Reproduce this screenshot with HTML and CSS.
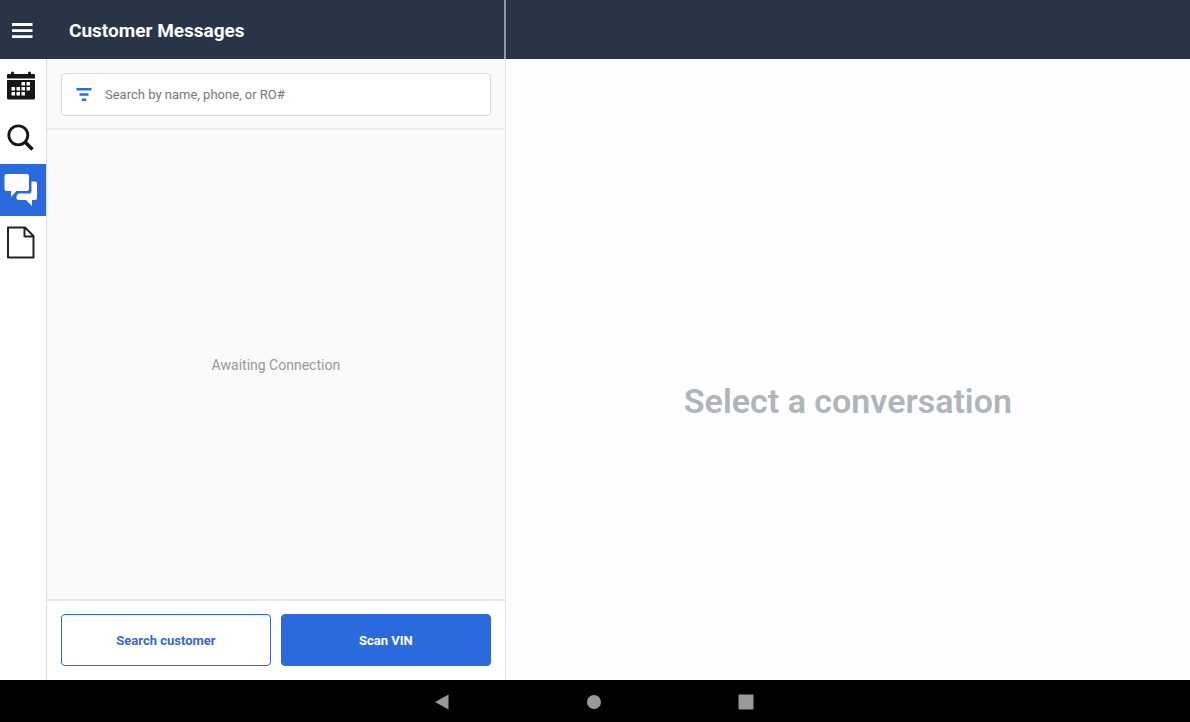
FILE: index.html
```html
<!DOCTYPE html>
<html lang="en">
<head>
<meta charset="utf-8">
<meta name="viewport" content="width=device-width, initial-scale=1">
<title>Customer Messages</title>
<link rel="stylesheet" href="styles.css">
</head>
<body>
<div class="app">
  <header class="topbar">
    <div class="topbar-main">
      <button class="menu-button" type="button" aria-label="Menu">
        <svg width="22" height="18" viewBox="0 0 22 18" fill="#fff" aria-hidden="true"><path d="M1 1h20.500v3H1zM1 7.200h20.500v2.800H1zM1 13.200h20.500v2.800H1z"/></svg>
      </button>
      <h1 class="title">Customer Messages</h1>
    </div>
  </header>

  <main class="content">
    <div class="left">
      <nav class="rail" aria-label="Sections">
        <a class="rail-item" href="#calendar" aria-label="Calendar">
          <svg width="30" height="32" viewBox="0 0 30 32" aria-hidden="true">
            <path fill="#151515" d="M1 4h4V3q0-1.500 1.500-1.500T8 3v1h14V3q0-1.500 1.500-1.500T25 3v1h3q1 0 1 1v3.500H1V5q0-1 1-1zM1 10h28v18q0 1.500-1.500 1.500h-25Q1 29.500 1 28z"/>
            <path fill="#fff" d="M15.500 12h3.500v3.500h-3.500zM20.500 12h3.500v3.500h-3.500zM5.500 17h3.500v3.500H5.500zM10.500 17h3.500v3.500h-3.500zM15.500 17h3.500v3.500h-3.500zM20.500 17h3.500v3.500h-3.500zM5.500 22h3.500v3.500H5.500zM10.500 22h3.500v3.500h-3.500zM15.500 22h3.500v3.500h-3.500z"/>
          </svg>
        </a>
        <a class="rail-item" href="#search" aria-label="Search">
          <svg width="30" height="32" viewBox="0 0 30 32" fill="none" stroke="#151515" aria-hidden="true"><circle cx="12.300" cy="13.300" r="9.500" stroke-width="2.800"/><path stroke-width="3.600" d="M19 20l7.500 7.500"/></svg>
        </a>
        <a class="rail-item rail-item-active" href="#messages" aria-label="Messages" aria-current="page">
          <svg width="34" height="34" viewBox="0 0 34 34" fill="#fff" aria-hidden="true">
            <path d="M2.500 1h20.500q2 0 2 2v13q0 2-2 2H12.500L7 24v-6H2.500q-2 0-2-2V3q0-2 2-2z"/>
            <path d="M27.500 8.500H31q2 0 2 2v14.500q0 2-2 2h-3v6l-6-6h-7.500q-2 0-2-2v-2L14.500 20.500h11q2 0 2-2z"/>
          </svg>
        </a>
        <a class="rail-item" href="#documents" aria-label="Documents">
          <svg width="30" height="34" viewBox="0 0 30 34" fill="none" stroke="#222" stroke-width="2" stroke-linejoin="round" aria-hidden="true"><path d="M2 2.500h17L27.500 11V32.500H2zM18.500 2.500v9h9"/></svg>
        </a>
      </nav>

      <section class="panel">
        <form class="search-area">
          <div class="search-box">
            <button class="filter-button" type="button" aria-label="Filter">
              <svg width="16" height="14" viewBox="0 0 16 14" fill="#2b6add" aria-hidden="true"><path d="M0.500 0h15v2.500H0.500zM3.500 5.300h9v2.400H3.500zM5.800 10.500h4.400v2.500H5.800z"/></svg>
            </button>
            <input class="search-input" type="text" aria-label="Search by name, phone, or RO#" placeholder="Search by name, phone, or RO#">
          </div>
        </form>
        <div class="list-empty">Awaiting Connection</div>
        <div class="actions">
          <button class="button button-outline" type="button">Search customer</button>
          <button class="button button-solid" type="button">Scan VIN</button>
        </div>
      </section>
    </div>

    <section class="conversation">
      <h2 class="placeholder">Select a conversation</h2>
    </section>
  </main>

  <footer class="system-bar">
    <button class="system-button" type="button" aria-label="Back"><svg width="16" height="16" viewBox="0 0 16 16" fill="#999" aria-hidden="true"><path d="M1 8L14.500 .5v15z"/></svg></button>
    <button class="system-button" type="button" aria-label="Home"><svg width="16" height="16" viewBox="0 0 16 16" fill="#999" aria-hidden="true"><circle cx="8" cy="8" r="7"/></svg></button>
    <button class="system-button" type="button" aria-label="Recent apps"><svg width="16" height="16" viewBox="0 0 16 16" fill="#999" aria-hidden="true"><rect x="0.500" y="0.500" width="15" height="15" rx="1"/></svg></button>
  </footer>
</div>
</body>
</html>
```
FILE: styles.css
```css
* {
  box-sizing: border-box;
}

body {
  margin: 0;
  font-family: Roboto, "Liberation Sans", sans-serif;
  color: #222;
  background: #fff;
}

button {
  margin: 0;
  padding: 0;
  border: 0;
  background: none;
  font: inherit;
  cursor: pointer;
}

svg {
  display: block;
}

.app {
  display: flex;
  flex-direction: column;
  min-height: 100vh;
}

.topbar,
.content {
  display: grid;
  grid-template-columns: 17fr 23fr;
}

.topbar {
  background: #293446;
}

.topbar-main {
  display: flex;
  align-items: center;
  gap: 36px;
  height: 59px;
  padding: 2px 0 0 11px;
  border-right: 2px solid #9299a4;
}

.title {
  margin: 0;
  font-size: 19px;
  line-height: 24px;
  font-weight: 700;
  color: #fff;
}

.content {
  flex: 1;
}

.left {
  display: flex;
}

.rail {
  flex: none;
  width: 47px;
  border-right: 1px solid #dcdcdf;
}

.rail-item {
  display: flex;
  align-items: center;
  height: 52px;
  padding-left: 6px;
}

.rail-item:first-child {
  height: 53px;
}

.rail-item-active {
  padding-left: 4px;
  background: #2b6add;
}

.panel {
  flex: 1;
  display: flex;
  flex-direction: column;
  border-right: 1px solid #e6e6e8;
  background: #fafafa;
}

.search-area {
  padding: 14px 14px 12px;
  border-bottom: 2px solid #eeeeef;
}

.search-box {
  display: flex;
  align-items: center;
  gap: 13px;
  height: 43px;
  padding: 0 14px;
  border: 1px solid #d5d8dc;
  border-radius: 4px;
  background: #fff;
}

.search-input {
  flex: 1;
  min-width: 0;
  padding: 0;
  border: 0;
  outline: 0;
  background: transparent;
  font: 13px/20px Roboto, "Liberation Sans", sans-serif;
  color: #222;
}

.search-input::placeholder {
  color: #77797d;
  opacity: 1;
}

.list-empty {
  flex: 1;
  display: flex;
  align-items: center;
  justify-content: center;
  font-size: 14px;
  line-height: 20px;
  color: #999;
}

.actions {
  display: grid;
  grid-template-columns: 1fr 1fr;
  gap: 10px;
  padding: 13px 14px 14px;
  border-top: 2px solid #e6e6e8;
  background: #fff;
}

.button {
  height: 52px;
  border: 1px solid #2b6add;
  border-radius: 4px;
  font-size: 13px;
  font-weight: 700;
}

.button-outline {
  background: #fff;
  color: #3868cd;
}

.button-solid {
  background: #2b6add;
  color: #fff;
}

.conversation {
  display: flex;
  align-items: center;
  justify-content: center;
  padding-top: 63px;
  background: #fefefe;
}

.placeholder {
  margin: 0;
  font-size: 34px;
  line-height: 40px;
  font-weight: 600;
  color: #b0b4bb;
}

.system-bar {
  display: flex;
  align-items: center;
  justify-content: center;
  gap: 136px;
  height: 42px;
  padding: 2px 3px 0 0;
  background: #000;
}
```
